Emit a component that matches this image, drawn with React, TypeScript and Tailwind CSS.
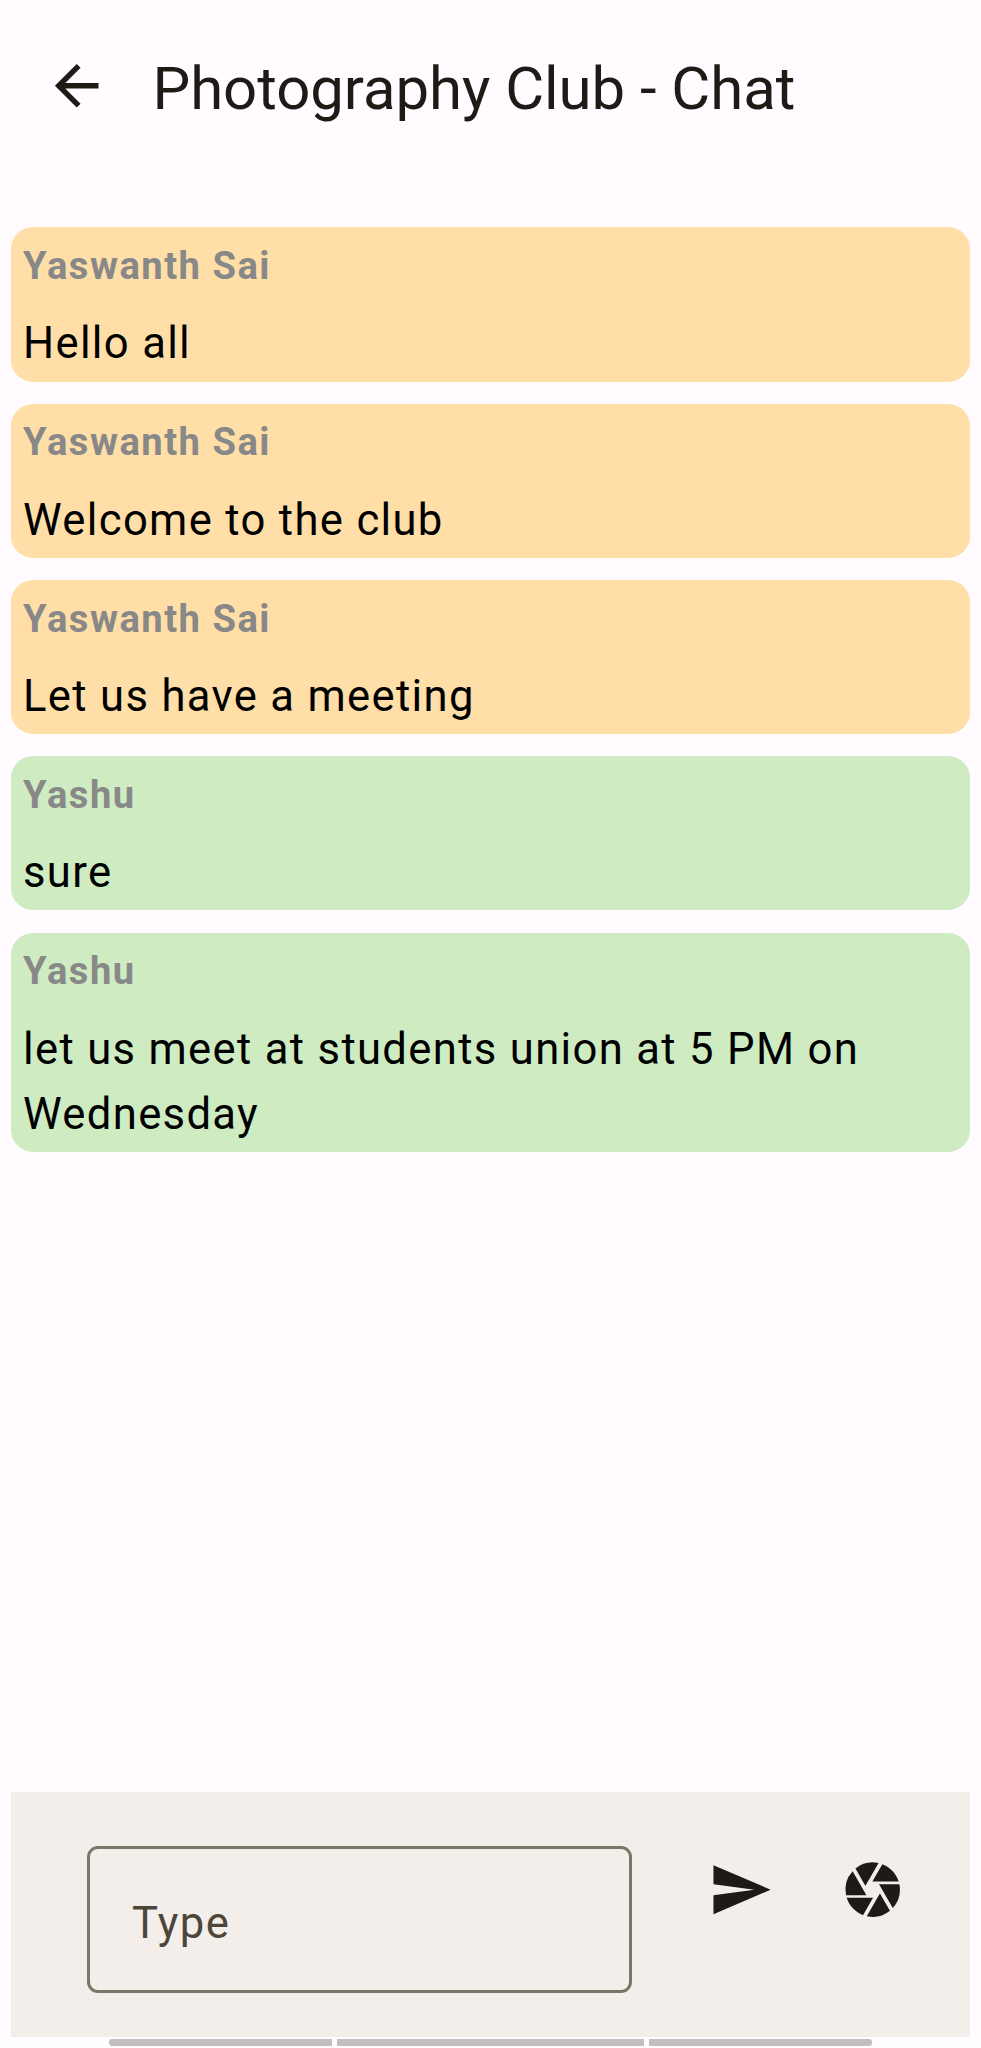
import { MdArrowBack, MdCamera, MdSend } from "react-icons/md";

type Message = { author: string; text: string; own: boolean };

const messages: Message[] = [
  { author: "Yaswanth Sai", text: "Hello all", own: false },
  { author: "Yaswanth Sai", text: "Welcome to the club", own: false },
  { author: "Yaswanth Sai", text: "Let us have a meeting", own: false },
  { author: "Yashu", text: "sure", own: true },
  { author: "Yashu", text: "let us meet at students union at 5 PM on Wednesday", own: true },
];

function Bubble({ author, text, own }: Message) {
  return (
    <article
      className={`flex flex-col gap-[11.8px] rounded-[21.8px] px-[12px] pt-[6.8px] pb-[4.8px] ${
        own ? "bg-[#ceebc2]" : "bg-[#ffdea7]"
      }`}
    >
      <h2 className="text-[38.15px] leading-[65.4px] font-bold tracking-[1.5px] text-[#888888]">{author}</h2>
      <p className="text-[43.6px] leading-[65.4px] tracking-[1.34px] text-black">{text}</p>
    </article>
  );
}

export default function App() {
  return (
    <div className="flex h-[2048px] w-[981px] flex-col overflow-hidden bg-[#fffbff] font-[Roboto,sans-serif] text-[#1e1b16]">
      <header className="flex h-[227.4px] shrink-0 items-start pt-[44px] pl-[44px]">
        <button aria-label="Back" className="mt-[8.6px]">
          <MdArrowBack className="size-[65.4px]" />
        </button>
        <h1 className="mt-px ml-[43px] text-[59.9px] leading-[88px] tracking-[-0.04px] whitespace-nowrap">
          Photography Club - Chat
        </h1>
      </header>

      <main className="flex flex-1 flex-col gap-[22.1px] px-[11px]">
        {messages.map((m, i) => (
          <Bubble key={i} {...m} />
        ))}
      </main>

      <form className="mx-[11px] flex h-[245px] shrink-0 items-start bg-[#f3eee9] pt-[54px] pl-[76px]">
        <input
          aria-label="Message"
          placeholder="Type"
          className="h-[147px] w-[545px] rounded-[11px] border-3 border-[#7c7667] pt-[7px] pl-[42px] text-[43.6px] tracking-[1.36px] outline-none placeholder:text-[#4c4639] placeholder:opacity-100"
        />
        <button type="button" aria-label="Send" className="mt-[11px] ml-[76.4px]">
          <MdSend className="size-[65.4px]" />
        </button>
        <button type="button" aria-label="Camera" className="mt-[11px] ml-[65.8px]">
          <MdCamera className="size-[65.4px]" />
        </button>
      </form>

      <nav className="flex h-[11px] shrink-0 gap-[5px] bg-[#fffdff] pt-[2px] pl-[109px]">
        <span className="h-[6.5px] w-[223px] rounded-l-[3px] bg-[#c3bfc1]" />
        <span className="h-[6.5px] w-[307px] bg-[#c3bfc1]" />
        <span className="h-[6.5px] w-[223px] rounded-r-[3px] bg-[#c3bfc1]" />
      </nav>
    </div>
  );
}
